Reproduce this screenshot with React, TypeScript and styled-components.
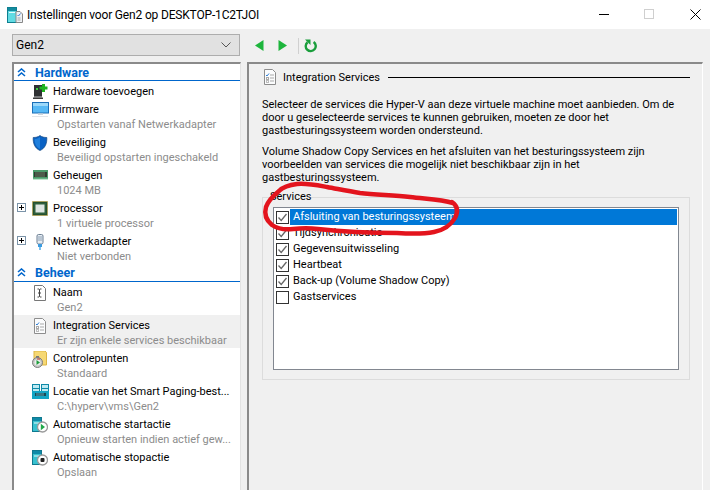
import React from "react";
import styled, { createGlobalStyle } from "styled-components";

const UI_FONT = `Roboto, "Open Sans", "Liberation Sans", sans-serif`;

const GlobalStyle = createGlobalStyle`
  html, body {
    margin: 0;
    padding: 0;
    height: 490px;
    overflow: hidden;
    background: #f0f0f0;
    font-family: ${UI_FONT};
    font-size: 11px;
    color: #000;
  }
`;

const Window = styled.div`
  position: relative;
  width: 710px;
  height: 490px;
  display: flex;
  flex-direction: column;
  overflow: hidden;
`;

const TitleBar = styled.div`
  height: 29px;
  flex: none;
  background: #fff;
  display: flex;
  align-items: center;
  padding: 0 9px 0 7px;
`;
const TitleText = styled.div`
  flex: 1;
  margin-left: 4px;
  font-size: 12px;
  letter-spacing: -0.17px;
`;
const WindowButtons = styled.div`
  display: flex;
  align-items: center;
  gap: 34px;
`;

const Toolbar = styled.div`
  height: 33px;
  flex: none;
  display: flex;
  align-items: center;
  padding: 0 0 0 12px;
`;
const Combo = styled.div`
  width: 228px;
  height: 22px;
  box-sizing: border-box;
  margin-top: -1px;
  background: #e1e1e1;
  border: 1px solid #adadad;
  display: flex;
  align-items: center;
  justify-content: space-between;
  padding: 0 8px 0 3px;
  font-size: 12px;
`;
const ToolIcons = styled.div`
  display: flex;
  align-items: center;
  margin-left: 15px;
`;
const ToolSeparator = styled.div`
  width: 1px;
  height: 16px;
  background: #d0d0d0;
  margin: 0 5px 0 11px;
`;

const Panels = styled.div`
  flex: 1;
  display: flex;
  gap: 6px;
  padding: 0 7px 0 12px;
  min-height: 0;
`;
const NavPanel = styled.div`
  width: 229px;
  flex: none;
  box-sizing: border-box;
  background: #fff;
  border-top: 2px solid #8a8a8a;
  border-left: 2px solid #8a8a8a;
  border-right: 1px solid #e3e3e3;
`;
const SectionHeader = styled.div<{ $height: number }>`
  height: ${(p) => p.$height}px;
  box-sizing: border-box;
  border-bottom: 1px solid #0066cc;
  display: flex;
  align-items: center;
  padding-left: 3px;
  color: #0066cc;
  font-weight: 700;
  font-size: 12.5px;
`;
const SectionTitle = styled.span`
  margin-left: 9px;
`;
const NavItem = styled.div<{ $active?: boolean; $single?: boolean }>`
  height: ${(p) => (p.$single ? 18 : 33)}px;
  box-sizing: border-box;
  padding-top: 3px;
  display: grid;
  grid-template-columns: 18px 21px 1fr;
  background: ${(p) => (p.$active ? "#f0f0f0" : "transparent")};
`;
const ToggleSlot = styled.div`
  padding: 2px 0 0 3px;
`;
const Toggle = styled.div`
  width: 9px;
  height: 9px;
  box-sizing: border-box;
  border: 1px solid #7b93a8;
  background: #fff;
  position: relative;
  &::before {
    content: "";
    position: absolute;
    left: 1px;
    top: 3px;
    width: 5px;
    height: 1px;
    background: #000;
  }
  &::after {
    content: "";
    position: absolute;
    left: 3px;
    top: 1px;
    width: 1px;
    height: 5px;
    background: #000;
  }
`;
const NavLabel = styled.div`
  line-height: 15px;
  white-space: nowrap;
`;
const NavSub = styled.div`
  line-height: 15px;
  padding-left: 4px;
  white-space: nowrap;
  color: #8c8c8c;
`;

const DetailPanel = styled.div`
  flex: 1;
  min-width: 0;
  box-sizing: border-box;
  border-top: 2px solid #8a8a8a;
  border-left: 2px solid #8a8a8a;
  border-right: 1px solid #fff;
  padding: 5px 12px 0 13px;
`;
const DetailHeading = styled.div`
  display: flex;
  align-items: center;
  height: 16px;
`;
const HeadingText = styled.span`
  margin-left: 5px;
  white-space: nowrap;
`;
const HeadingRule = styled.div`
  flex: 1;
  height: 1px;
  background: #000;
  margin-left: 8px;
`;
const Paragraph = styled.p<{ $top: number }>`
  margin: ${(p) => p.$top}px 0 0;
  line-height: 13px;
  white-space: nowrap;
`;
const GroupBox = styled.fieldset`
  margin: 6px 0 0;
  padding: 0 10px 9px 10px;
  height: 190px;
  box-sizing: border-box;
  border: 1px solid #dcdcdc;
  min-width: 0;
`;
const GroupLegend = styled.legend`
  padding: 0;
  margin-left: -3px;
  line-height: 14px;
`;
const ListBox = styled.div`
  height: 163px;
  box-sizing: border-box;
  margin-top: 3px;
  border: 1px solid #828790;
  background: #fff;
  padding: 1px;
`;
const ServiceRow = styled.div`
  height: 16px;
  display: flex;
  align-items: center;
  padding-left: 1px;
`;
const CheckBox = styled.div`
  width: 13px;
  height: 13px;
  flex: none;
  box-sizing: border-box;
  border: 1px solid #333;
  background: #fff;
  display: flex;
  align-items: center;
  justify-content: center;
`;
const ServiceName = styled.div<{ $selected?: boolean }>`
  flex: 1;
  height: 16px;
  line-height: 16px;
  margin-left: 1px;
  padding-left: 3px;
  background: ${(p) => (p.$selected ? "#0078d7" : "transparent")};
  color: ${(p) => (p.$selected ? "#fff" : "#000")};
`;
const Scribble = styled.svg`
  position: absolute;
  left: 0;
  top: 0;
  pointer-events: none;
`;

const IconHardware = () => (
  <svg width="16" height="16" viewBox="0 0 16 16">
    <rect x="2" y="1" width="8" height="11" fill="#2f3133" />
    <rect x="2" y="12" width="8" height="1.5" fill="#77797b" />
    <rect x="1" y="13.5" width="10" height="1.5" fill="#3a3a3a" />
    <rect x="4" y="4" width="2" height="2" fill="#3fd43f" />
    <path d="M10 0h3v2.500h2.500v3H13V8h-3V5.500H7.500v-3H10z" fill="#1fb51f" />
  </svg>
);
const IconFirmware = () => (
  <svg width="17" height="16" viewBox="0 0 17 16">
    <rect x="0.500" y="0.500" width="16" height="10.500" fill="#57b9f5" stroke="#1a6fb8" />
    <rect x="1" y="1" width="15" height="3" fill="#9bd8fa" />
    <rect x="6" y="11.500" width="5" height="1.500" fill="#cfd6dc" />
    <rect x="0" y="14" width="16" height="1" fill="#e2e6ea" />
  </svg>
);
const IconShield = () => (
  <svg width="16" height="16" viewBox="0 0 16 16">
    <path d="M8 .5c2 1.600 4.200 2 6.800 2 .3 6-1.700 10.800-6.800 13C2.900 13.300.900 8.500 1.200 2.500 3.800 2.500 6 2.100 8 .5z" fill="#0a62c4" stroke="#11457f" strokeWidth="0.7" />
    <path d="M8 2v12C4 12 2.600 8 2.700 4c2 0 3.800-.6 5.300-2z" fill="#1f7fdc" />
  </svg>
);
const IconMemory = () => (
  <svg width="16" height="16" viewBox="0 0 16 16">
    <rect x="1" y="2" width="15" height="9" fill="#4a9a6a" />
    <rect x="2" y="4" width="13" height="5" fill="#2f3a30" />
    <path d="M4 4v5M6 4v5M8 4v5M10 4v5M12 4v5" stroke="#7a8f75" strokeWidth="0.8" />
    <path d="M1 11h15" stroke="#7fc79a" />
  </svg>
);
const IconProcessor = () => (
  <svg width="16" height="16" viewBox="0 0 16 16">
    <rect x="0.500" y="0.500" width="15" height="14" fill="#24502f" stroke="#c29a2e" strokeDasharray="1 1" />
    <rect x="2" y="2" width="12" height="11" fill="#2f5f3c" />
    <rect x="3.500" y="3.500" width="9" height="8" fill="#dfe5e2" />
  </svg>
);
const IconNetwork = () => (
  <svg width="16" height="16" viewBox="0 0 16 16">
    <rect x="5" y="0.500" width="6" height="9.500" rx="1.500" fill="#e6edf3" stroke="#6d7f93" />
    <rect x="6.500" y="2" width="1" height="5" fill="#8ea1b5" />
    <rect x="8.500" y="2" width="1" height="5" fill="#8ea1b5" />
    <rect x="6" y="10" width="4" height="3" fill="#3c9be0" />
    <rect x="7" y="13" width="2" height="3" fill="#7ac0ee" />
  </svg>
);
const IconName = () => (
  <svg width="16" height="16" viewBox="0 0 16 16">
    <path d="M2.500.5h8l3 3v12h-11z" fill="#fff" stroke="#777" />
    <path d="M5.500 4H7l.5.500L8 4h1.500M7.500 4.500v7M5.500 12H7l.5-.5.500.5h1.500M6 8h3" stroke="#444" fill="none" />
  </svg>
);
const IconServices = () => (
  <svg width="16" height="16" viewBox="0 0 16 16">
    <path d="M2.500.5h8l3 3v12h-11z" fill="#fbfcfd" stroke="#8d8d8d" />
    <path d="M4 6l1 1 2-2.500" stroke="#2f7fd6" fill="none" />
    <path d="M8 6h4M8 9h4M8 12h4" stroke="#a9a9a9" />
    <rect x="4.500" y="8.500" width="2" height="2" fill="none" stroke="#a9a9a9" />
    <rect x="4.500" y="11.500" width="2" height="2" fill="none" stroke="#bdbdbd" />
  </svg>
);
const IconCheckpoint = () => (
  <svg width="16" height="18" viewBox="0 0 16 18">
    <path d="M2 0h11l1.500 1.500V14H2z" fill="#f6d873" stroke="#dcb544" />
    <circle cx="5.500" cy="11.500" r="5" fill="#c7c7c7" stroke="#7b7b7b" />
    <circle cx="5.500" cy="11.500" r="3" fill="#ececec" />
    <rect x="4" y="5" width="3" height="1.500" fill="#777" />
    <path d="M4.500 9l3.500 2.500-3.500 2.500z" fill="#1e9e3c" />
    <path d="M5 8h3" stroke="#c23b2a" />
  </svg>
);
const IconPaging = () => (
  <svg width="17" height="16" viewBox="0 0 17 16">
    <rect x="0.500" y="0.500" width="7" height="8" fill="#bfeaf2" stroke="#0f8aa8" />
    <rect x="9.500" y="0.500" width="7" height="8" fill="#bfeaf2" stroke="#0f8aa8" />
    <rect x="1" y="4" width="6" height="1" fill="#0f8aa8" />
    <rect x="10" y="4" width="6" height="1" fill="#0f8aa8" />
    <rect x="0" y="7" width="17" height="8" fill="#12a4c4" />
    <path d="M3 9h11v3H3z" fill="#144a58" />
    <path d="M5 9v3M7 9v3M9 9v3M11 9v3" stroke="#7fc9d8" strokeWidth="0.7" />
  </svg>
);
const IconAction = ({ stop }: { stop?: boolean }) => (
  <svg width="16" height="16" viewBox="0 0 16 16">
    <rect x="0.500" y="0.500" width="9" height="14" fill="#38c1cf" stroke="#10798f" />
    <rect x="1" y="1" width="8" height="3" fill="#0f8aa8" />
    <rect x="2" y="5.500" width="5" height="1" fill="#e6fafc" />
    <circle cx="10.500" cy="10" r="5" fill="#fff" stroke="#9a9a9a" strokeWidth="1.300" />
    {stop ? (
      <rect x="8.500" y="8" width="4" height="4" rx="1" fill="#222" />
    ) : (
      <path d="M8.800 6.800l4.200 3.200-4.200 3.200z" fill="#22a84a" />
    )}
  </svg>
);
const IconWindow = () => (
  <svg width="16" height="16" viewBox="0 0 16 16">
    <rect x="0.500" y="0.500" width="9" height="15" fill="#61dbe3" stroke="#0e7f90" />
    <rect x="1" y="1" width="8" height="3" fill="#138ba0" />
    <rect x="2" y="5" width="6" height="1" fill="#e6fafc" />
    <path d="M9 4.500h4l2.500 2.500v8.500H9z" fill="#eef1f4" stroke="#888" />
    <path d="M10.500 8l1 1 2-2.500" stroke="#3b82d6" fill="none" />
    <path d="M10.500 11h3M10.500 13h3" stroke="#a5a5a5" />
  </svg>
);
const Chevrons = () => (
  <svg width="9" height="9" viewBox="0 0 9 9">
    <path d="M1 4l3.500-3L8 4M1 8l3.500-3L8 8" fill="none" stroke="#0066cc" strokeWidth="1.600" />
  </svg>
);
const ArrowLeft = () => (
  <svg width="9" height="11" viewBox="0 0 9 11" display="block">
    <path d="M8.500 0v11L0 5.500z" fill="#1db53c" />
  </svg>
);
const ArrowRight = () => (
  <svg width="9" height="11" viewBox="0 0 9 11" display="block">
    <path d="M.5 0v11L9 5.500z" fill="#1db53c" />
  </svg>
);
const ArrowGap = styled.div`
  width: 14px;
`;
const Refresh = () => (
  <svg width="13" height="14" viewBox="0 0 13 14" display="block">
    <path d="M3.600 3.200A5 5 0 1 0 9.600 3" fill="none" stroke="#1a9e3c" strokeWidth="2.400" />
    <path d="M1 .5h5.500V6z" fill="#1a9e3c" />
  </svg>
);
const ComboChevron = () => (
  <svg width="10" height="6" viewBox="0 0 10 6">
    <path d="M.5.500L5 5 9.500.5" fill="none" stroke="#555" />
  </svg>
);
const Check = () => (
  <svg width="11" height="11" viewBox="0 0 11 11">
    <path d="M1.500 5.500L4.200 8.500 9.500 2" fill="none" stroke="#666" strokeWidth="1.300" />
  </svg>
);

type Item = { label: string; sub?: string; icon: React.ReactNode; expand?: boolean; active?: boolean };

const hardware: Item[] = [
  { label: "Hardware toevoegen", icon: <IconHardware /> },
  { label: "Firmware", sub: "Opstarten vanaf Netwerkadapter", icon: <IconFirmware /> },
  { label: "Beveiliging", sub: "Beveiligd opstarten ingeschakeld", icon: <IconShield /> },
  { label: "Geheugen", sub: "1024 MB", icon: <IconMemory /> },
  { label: "Processor", sub: "1 virtuele processor", icon: <IconProcessor />, expand: true },
  { label: "Netwerkadapter", sub: "Niet verbonden", icon: <IconNetwork />, expand: true },
];
const beheer: Item[] = [
  { label: "Naam", sub: "Gen2", icon: <IconName /> },
  { label: "Integration Services", sub: "Er zijn enkele services beschikbaar", icon: <IconServices />, active: true },
  { label: "Controlepunten", sub: "Standaard", icon: <IconCheckpoint /> },
  { label: "Locatie van het Smart Paging-best...", sub: "C:\\hyperv\\vms\\Gen2", icon: <IconPaging /> },
  { label: "Automatische startactie", sub: "Opnieuw starten indien actief gew...", icon: <IconAction /> },
  { label: "Automatische stopactie", sub: "Opslaan", icon: <IconAction stop /> },
];
const services = [
  { name: "Afsluiting van besturingssysteem", on: true, selected: true },
  { name: "Tijdsynchronisatie", on: true },
  { name: "Gegevensuitwisseling", on: true },
  { name: "Heartbeat", on: true },
  { name: "Back-up (Volume Shadow Copy)", on: true },
  { name: "Gastservices", on: false },
];

const NavRows = ({ items }: { items: Item[] }) => (
  <>
    {items.map((item) => (
      <NavItem key={item.label} $active={item.active} $single={!item.sub}>
        <ToggleSlot>{item.expand && <Toggle />}</ToggleSlot>
        <div>{item.icon}</div>
        <div>
          <NavLabel>{item.label}</NavLabel>
          {item.sub && <NavSub>{item.sub}</NavSub>}
        </div>
      </NavItem>
    ))}
  </>
);

export default function App() {
  return (
    <Window>
      <GlobalStyle />
      <TitleBar>
        <IconWindow />
        <TitleText>Instellingen voor Gen2 op DESKTOP-1C2TJOI</TitleText>
        <WindowButtons>
          <svg width="11" height="11" viewBox="0 0 11 11">
            <path d="M0 5.500h10" stroke="#000" />
          </svg>
          <svg width="12" height="11" viewBox="0 0 12 11">
            <rect x="0.500" y="0.500" width="9" height="9" fill="none" stroke="#cfcfcf" />
          </svg>
          <svg width="11" height="11" viewBox="0 0 11 11">
            <path d="M.5.500l10 10M10.500.5l-10 10" stroke="#000" />
          </svg>
        </WindowButtons>
      </TitleBar>
      <Toolbar>
        <Combo>
          Gen2
          <ComboChevron />
        </Combo>
        <ToolIcons>
          <ArrowLeft />
          <ArrowGap />
          <ArrowRight />
          <ToolSeparator />
          <Refresh />
        </ToolIcons>
      </Toolbar>
      <Panels>
        <NavPanel>
          <SectionHeader $height={17}>
            <Chevrons />
            <SectionTitle>Hardware</SectionTitle>
          </SectionHeader>
          <NavRows items={hardware} />
          <SectionHeader $height={18}>
            <Chevrons />
            <SectionTitle>Beheer</SectionTitle>
          </SectionHeader>
          <NavRows items={beheer} />
        </NavPanel>
        <DetailPanel>
          <DetailHeading>
            <IconServices />
            <HeadingText>Integration Services</HeadingText>
            <HeadingRule />
          </DetailHeading>
          <Paragraph $top={13}>
            Selecteer de services die Hyper-V aan deze virtuele machine moet aanbieden. Om de
            <br />
            door u geselecteerde services te kunnen gebruiken, moeten ze door het
            <br />
            gastbesturingssysteem worden ondersteund.
          </Paragraph>
          <Paragraph $top={8}>
            Volume Shadow Copy Services en het afsluiten van het besturingssysteem zijn
            <br />
            voorbeelden van services die mogelijk niet beschikbaar zijn in het
            <br />
            gastbesturingssysteem.
          </Paragraph>
          <GroupBox>
            <GroupLegend>Services</GroupLegend>
            <ListBox>
              {services.map((s) => (
                <ServiceRow key={s.name}>
                  <CheckBox>{s.on && <Check />}</CheckBox>
                  <ServiceName $selected={s.selected}>{s.name}</ServiceName>
                </ServiceRow>
              ))}
            </ListBox>
          </GroupBox>
        </DetailPanel>
      </Panels>
      <Scribble width="710" height="490" viewBox="0 0 710 490">
        <path
          d="M453 203C440 199 425 199 410 197C392 195 375 195 360 193C348 191 338 189 327 187C316 185 306 183 297 184C288 185 283 187 279 191C273 196 268 201 266 207C264 214 266 220 272 225C278 229 285 230 293 229C302 228 310 228 318 229C345 232 372 233 397 233C412 234 424 234 434 232C444 230 451 225 455 218C458 212 458 206 452 202"
          fill="none"
          stroke="#e3141d"
          strokeWidth="4.500"
          strokeLinecap="round"
        />
      </Scribble>
    </Window>
  );
}
